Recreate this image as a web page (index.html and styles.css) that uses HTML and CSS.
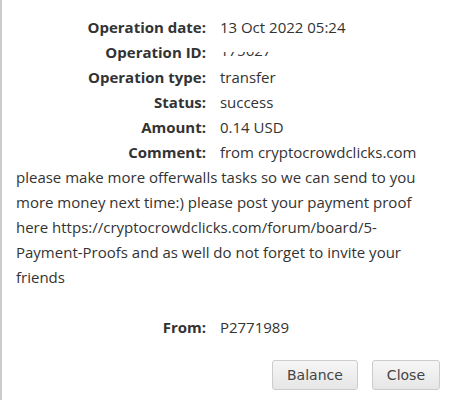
FILE: index.html
```html
<!DOCTYPE html>
<html lang="en">
<head>
    <meta charset="UTF-8">
    <title>Operation details</title>
    <link rel="stylesheet" href="styles.css">
</head>
<body>

<div class="dialog">
    <div class="details">
        <div class="row"><span class="label">Operation date:</span> <span class="value">13 Oct 2022 05:24</span></div>
        <div class="row"><span class="label">Operation ID:</span> <span class="value"><span class="cut"><span>175627</span></span></span></div>
        <div class="row"><span class="label">Operation type:</span> <span class="value">transfer</span></div>
        <div class="row"><span class="label">Status:</span> <span class="value">success</span></div>
        <div class="row"><span class="label">Amount:</span> <span class="value">0.14 USD</span></div>
        <div class="row"><span class="label">Comment:</span> <span class="value">from cryptocrowdclicks.com please make more offerwalls tasks so we can send to you more money next time:) please post your payment proof here https://cryptocrowdclicks.com/forum/board/5-Payment-Proofs and as well do not forget to invite your friends</span></div>
        <div class="row from"><span class="label">From:</span> <span class="value">P2771989</span></div>
    </div>
    <div class="buttons">
        <button class="btn">Balance</button>
        <button class="btn">Close</button>
    </div>
</div>

</body>
</html>
```

FILE: styles.css
```css
body {
    margin: 0;
    background: #fff;
    font-family: "Open Sans", sans-serif;
    font-size: 15px;
    color: #333;
}
.dialog {
    border-left: 2px solid #ccc;
    height: 400px;
    box-sizing: border-box;
    padding: 15px 10px 0 14px;
}
.details {
    width: 408px;
    line-height: 25px;
}
.label {
    display: inline-block;
    width: 190px;
    text-align: right;
    font-weight: bold;
    margin-right: 10px;
}
.cut {
    display: inline-block;
    height: 6px;
    overflow: hidden;
    vertical-align: baseline;
    line-height: 15px;
}
.cut span {
    display: block;
    margin-top: -9px;
}
.from {
    margin-top: 25px;
}
.buttons {
    display: flex;
    justify-content: flex-end;
    gap: 14px;
    margin-top: 20px;
}
.btn {
    font-family: "DejaVu Sans", sans-serif;
    font-size: 14px;
    color: #444;
    padding: 0 14px;
    height: 30px;
    border: 1px solid #ccc;
    border-radius: 3px;
    background: linear-gradient(#f6f6f6, #e6e6e6);
}
```
